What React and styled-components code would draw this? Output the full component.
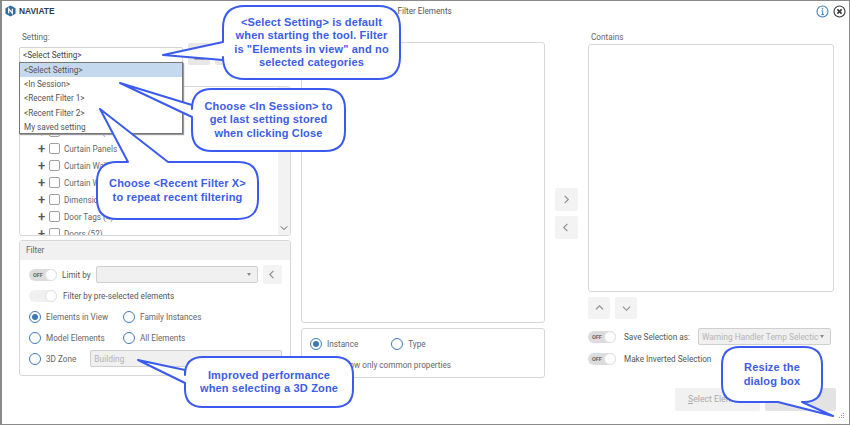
import React from 'react';
import styled, { createGlobalStyle } from 'styled-components';

const GlobalStyle = createGlobalStyle`
  html, body {
    margin: 0;
    padding: 0;
    background: #fff;
  }
`;

const Dialog = styled.div`
  position: relative;
  box-sizing: border-box;
  width: 850px;
  height: 425px;
  background: #fff;
  border: 1px solid #8a8a8a;
  border-left-width: 2px;
  overflow: hidden;
  font-family: Roboto, 'Open Sans', sans-serif;
  font-size: 8.2px;
  color: #555;
`;

const TitleBar = styled.div`
  position: relative;
  height: 20px;
  display: flex;
  align-items: center;
  padding: 0 3px;
`;

const Logo = styled.div`
  display: flex;
  align-items: center;
  gap: 3px;
  font-family: 'Liberation Sans', sans-serif;
  font-size: 8.4px;
  font-weight: 700;
  color: #2c3e50;
`;

const Title = styled.div`
  margin-left: 343px;
  color: #555;
`;

const TitleIcons = styled.div`
  margin-left: auto;
  display: flex;
  align-items: center;
  gap: 4px;
`;

const Body = styled.div`
  display: grid;
  grid-template-columns: 272px 244px 23px 246px;
  column-gap: 10px;
  padding: 0 0 0 17px;
`;

const LeftColumn = styled.div`
  position: relative;
  display: flex;
  flex-direction: column;
`;

const FieldLabel = styled.div`
  height: 21px;
  padding: 11px 0 0 3px;
  box-sizing: border-box;
  color: #666;
`;

const SettingRow = styled.div`
  display: flex;
  align-items: center;
  gap: 5px;
  height: 22px;
  margin-top: 1px;
`;

const Combo = styled.div`
  box-sizing: border-box;
  width: 164px;
  height: 16px;
  margin-top: 1px;
  padding-left: 3px;
  line-height: 14px;
  border: 1px solid #d4d4d4;
  border-radius: 2px;
  background: #fff;
  color: #444;
`;

const IconButton = styled.div`
  box-sizing: border-box;
  display: flex;
  align-items: center;
  justify-content: center;
  flex: none;
  width: ${(p) => p.$size || 22}px;
  height: ${(p) => p.$size || 22}px;
  border-radius: 2px;
  background: ${(p) => (p.$dark ? '#e7e7e7' : '#f3f3f3')};
  color: #8a8a8a;
`;

const Dropdown = styled.div`
  position: absolute;
  left: 0;
  top: 41px;
  box-sizing: border-box;
  width: 164px;
  height: 72px;
  background: #fff;
  border: 1px solid #777;
  box-shadow: 1px 1px 1px #999;
  z-index: 2;
`;

const DropdownItem = styled.div`
  height: 14.2px;
  line-height: 14px;
  padding-left: 4px;
  color: #555;
  background: ${(p) => (p.$selected ? '#c5d9ee' : 'transparent')};
`;

const TreeBox = styled.div`
  position: relative;
  box-sizing: border-box;
  height: 150px;
  margin-top: 21px;
  padding: 36px 0 0 17px;
  border: 1px solid #d8d8d8;
  border-radius: 3px;
  overflow: hidden;
`;

const TreeRow = styled.div`
  display: flex;
  align-items: center;
  height: 17px;
  gap: 3px;
  color: #666;
`;

const Plus = styled.span`
  width: 9px;
  font-size: 13px;
  font-weight: 500;
  line-height: 13px;
  color: #555;
  text-align: center;
`;

const Check = styled.span`
  box-sizing: border-box;
  width: 11px;
  height: 11px;
  margin-right: 1px;
  border: 1px solid #a0a0a0;
  border-radius: 2px;
`;

const ScrollTrack = styled.div`
  position: absolute;
  right: 0;
  top: 0;
  bottom: 0;
  width: 12px;
  background: #f2f2f2;
  display: flex;
  align-items: flex-end;
  justify-content: center;
  padding-bottom: 3px;
  box-sizing: border-box;
`;

const Panel = styled.div`
  box-sizing: border-box;
  border: 1px solid #d8d8d8;
  border-radius: 3px;
  background: #fff;
`;

const FilterPanel = styled(Panel)`
  height: 136px;
  margin-top: 4px;
`;

const PanelHeader = styled.div`
  height: 19px;
  line-height: 19px;
  padding-left: 6px;
  background: #f1f1f1;
  color: #666;
`;

const FilterBody = styled.div`
  display: flex;
  flex-direction: column;
  padding: 4px 8px 0 9px;
`;

const Row = styled.div`
  display: flex;
  align-items: center;
  height: ${(p) => p.$h || 21}px;
  gap: ${(p) => p.$gap || 6}px;
  white-space: nowrap;
`;

const ToggleTrack = styled.div`
  position: relative;
  box-sizing: border-box;
  flex: none;
  width: 28px;
  height: 12px;
  border-radius: 6px;
  background: ${(p) => (p.$faded ? '#f0f0f0' : '#dcdcdc')};
  font-size: 5.5px;
  font-weight: 700;
  line-height: 12px;
  padding-left: 4px;
  color: #666;
`;

const ToggleKnob = styled.div`
  position: absolute;
  right: 0;
  top: 0;
  box-sizing: border-box;
  width: 12px;
  height: 12px;
  border-radius: 50%;
  background: #fff;
  border: 1px solid #e2e2e2;
`;

const SelectBox = styled.div`
  box-sizing: border-box;
  display: flex;
  align-items: center;
  justify-content: space-between;
  flex: ${(p) => (p.$fill ? 1 : 'none')};
  width: ${(p) => (p.$w ? `${p.$w}px` : 'auto')};
  height: 17px;
  padding: 0 6px 0 3px;
  background: #f0f0f0;
  border: 1px solid #cfcfcf;
  border-radius: 2px;
  color: #b4b4b4;
  font-size: 8.4px;
  white-space: nowrap;
  overflow: hidden;
`;

const Caret = styled.span`
  flex: none;
  width: 0;
  height: 0;
  border-left: 2px solid transparent;
  border-right: 2px solid transparent;
  border-top: 3px solid #888;
`;

const RadioGrid = styled.div`
  display: grid;
  grid-template-columns: 94px 1fr;
`;

const RadioLabel = styled.label`
  display: flex;
  align-items: center;
  gap: 5px;
  height: 21px;
  color: #666;
`;

const RadioDot = styled.span`
  box-sizing: border-box;
  display: flex;
  align-items: center;
  justify-content: center;
  flex: none;
  width: 12px;
  height: 12px;
  border-radius: 50%;
  border: 1.5px solid #3f79b5;
  &::after {
    content: '';
    display: ${(p) => (p.$on ? 'block' : 'none')};
    width: 6px;
    height: 6px;
    border-radius: 50%;
    background: #3f79b5;
  }
`;

const MiddleColumn = styled.div`
  display: flex;
  flex-direction: column;
  padding-top: 21px;
`;

const ListPanel = styled(Panel)`
  height: ${(p) => p.$h}px;
  margin-top: ${(p) => p.$mt || 0}px;
`;

const InstancePanel = styled(Panel)`
  height: 50px;
  margin-top: 5px;
  padding: 4px 8px 0;
`;

const TypeRow = styled.div`
  display: flex;
  gap: 33px;
`;

const CommonRow = styled(Row)`
  margin-top: 0;
  color: #666;
`;

const ArrowColumn = styled.div`
  display: flex;
  flex-direction: column;
  gap: 5px;
  padding-top: 167px;
`;

const RightColumn = styled.div`
  display: flex;
  flex-direction: column;
`;

const MoveRow = styled.div`
  display: flex;
  gap: 5px;
  margin-top: 5px;
`;

const OptionRows = styled.div`
  display: flex;
  flex-direction: column;
  margin-top: 6px;
`;

const Footer = styled.div`
  display: flex;
  justify-content: flex-end;
  gap: 5px;
  margin: 18px -2px 0 0;
`;

const FooterButton = styled.div`
  box-sizing: border-box;
  width: ${(p) => p.$w}px;
  height: 23px;
  line-height: 23px;
  padding-left: 13px;
  border-radius: 2px;
  background: ${(p) => (p.$dark ? '#e3e3e3' : '#f1f1f1')};
  color: #aaa;
  font-size: 8.7px;
  white-space: nowrap;
`;

const Mnemonic = styled.span`
  text-decoration: underline;
`;

const Grip = styled.svg`
  position: absolute;
  right: 4px;
  bottom: 4px;
`;

const Callout = styled.div`
  position: absolute;
  left: ${(p) => p.$left}px;
  top: ${(p) => p.$top}px;
  width: ${(p) => p.$width}px;
  height: ${(p) => p.$height}px;
  z-index: 3;
  display: flex;
  align-items: center;
  justify-content: center;
  text-align: center;
  font-family: 'Liberation Sans', Arial, sans-serif;
  font-size: 11px;
  font-weight: 700;
  line-height: 13.5px;
  letter-spacing: 0.15px;
  color: #3c5de6;
  white-space: pre-line;
`;

const CalloutText = styled.span`
  position: relative;
`;

const TailShape = styled.svg`
  position: absolute;
  left: 0;
  top: 0;
  overflow: visible;
`;

// bubble outline, drawn relative to the page so tail tips can reach targets
const Bubble = ({ x, y, w, h, r, tip, a, b, side, children }) => {
  const x2 = x + w;
  const y2 = y + h;
  let d;
  if (side === 'left') {
    d = `M${x + r} ${y}H${x2 - r}Q${x2} ${y} ${x2} ${y + r}V${y2 - r}Q${x2} ${y2} ${x2 - r} ${y2}H${x + r}Q${x} ${y2} ${x} ${y2 - r}V${b}L${tip[0]} ${tip[1]}L${x} ${a}V${y + r}Q${x} ${y} ${x + r} ${y}Z`;
  } else if (side === 'top') {
    d = `M${x + r} ${y}H${a}L${tip[0]} ${tip[1]}L${b} ${y}H${x2 - r}Q${x2} ${y} ${x2} ${y + r}V${y2 - r}Q${x2} ${y2} ${x2 - r} ${y2}H${x + r}Q${x} ${y2} ${x} ${y2 - r}V${y + r}Q${x} ${y} ${x + r} ${y}Z`;
  } else {
    d = `M${x + r} ${y}H${x2 - r}Q${x2} ${y} ${x2} ${y + r}V${y2 - r}Q${x2} ${y2} ${x2 - r} ${y2}H${b}L${tip[0]} ${tip[1]}L${a} ${y2}H${x + r}Q${x} ${y2} ${x} ${y2 - r}V${y + r}Q${x} ${y} ${x + r} ${y}Z`;
  }
  return (
    <Callout $left={x} $top={y} $width={w} $height={h}>
      <TailShape width={w} height={h} viewBox={`${x} ${y} ${w} ${h}`}>
        <path d={d} fill="#fff" stroke="#3b5bee" strokeWidth="2" strokeLinejoin="round" />
      </TailShape>
      <CalloutText>{children}</CalloutText>
    </Callout>
  );
};

const Chevron = ({ dir, size = 9, color = '#8a8a8a' }) => {
  const paths = {
    left: 'M6 1L2 5L6 9',
    right: 'M3 1L7 5L3 9',
    up: 'M1 6L5 2L9 6',
    down: 'M1 3L5 7L9 3'
  };
  return (
    <svg width={size} height={size} viewBox="0 0 10 10" fill="none">
      <path d={paths[dir]} stroke={color} strokeWidth="1.2" />
    </svg>
  );
};

const Toggle = ({ faded }) => (
  <ToggleTrack $faded={faded}>
    {faded ? '' : 'OFF'}
    <ToggleKnob />
  </ToggleTrack>
);

const Radio = ({ on, children }) => (
  <RadioLabel>
    <RadioDot $on={on} />
    {children}
  </RadioLabel>
);

const treeItems = [
  'Casework (14)',
  'Curtain Panels',
  'Curtain Wall Grids',
  'Curtain Wall Mullions',
  'Dimensions (3)',
  'Door Tags (4)',
  'Doors (52)'
];

export default function App() {
  return (
    <>
      <GlobalStyle />
      <Dialog>
        <TitleBar>
          <Logo>
            <svg width="11" height="12" viewBox="0 0 12 13">
              <path d="M6 0.5L11.5 3.5V9.5L6 12.5L0.5 9.5V3.5Z" fill="#2f6f9f" />
              <path d="M4 9V4L8 9V4" fill="none" stroke="#fff" strokeWidth="1.3" />
            </svg>
            NAVIATE
          </Logo>
          <Title>Filter Elements</Title>
          <TitleIcons>
            <svg width="13" height="13" viewBox="0 0 13 13" fill="none">
              <circle cx="6.5" cy="6.5" r="5.5" stroke="#3f7fc0" strokeWidth="1.1" />
              <path d="M5.5 5.8H6.7V9.6M5.3 9.6H8" stroke="#3f7fc0" strokeWidth="1" />
              <circle cx="6.5" cy="3.8" r="0.8" fill="#3f7fc0" />
            </svg>
            <svg width="13" height="13" viewBox="0 0 13 13" fill="none">
              <circle cx="6.5" cy="6.5" r="5.5" stroke="#333" strokeWidth="1.1" />
              <path d="M4.4 4.4L8.6 8.6M8.6 4.4L4.4 8.6" stroke="#333" strokeWidth="1.5" />
            </svg>
          </TitleIcons>
        </TitleBar>

        <Body>
          <LeftColumn>
            <FieldLabel>Setting:</FieldLabel>
            <SettingRow>
              <Combo>&lt;Select Setting&gt;</Combo>
              <IconButton $size={22} $dark>
                <svg width="11" height="11" viewBox="0 0 11 11">
                  <path d="M0.5 0.5H10.5V10.5H0.5Z" fill="#666" />
                  <path d="M2 2H9V4.5H2Z" fill="#e7e7e7" />
                </svg>
              </IconButton>
              <IconButton $size={22} $dark />
            </SettingRow>
            <Dropdown>
              <DropdownItem $selected>&lt;Select Setting&gt;</DropdownItem>
              <DropdownItem>&lt;In Session&gt;</DropdownItem>
              <DropdownItem>&lt;Recent Filter 1&gt;</DropdownItem>
              <DropdownItem>&lt;Recent Filter 2&gt;</DropdownItem>
              <DropdownItem>My saved setting</DropdownItem>
            </Dropdown>
            <TreeBox>
              {treeItems.map((item) => (
                <TreeRow key={item}>
                  <Plus>+</Plus>
                  <Check />
                  {item}
                </TreeRow>
              ))}
              <ScrollTrack>
                <Chevron dir="down" size={8} color="#555" />
              </ScrollTrack>
            </TreeBox>
            <FilterPanel>
              <PanelHeader>Filter</PanelHeader>
              <FilterBody>
                <Row $gap={5}>
                  <Toggle />
                  Limit by
                  <SelectBox $fill>
                    <span />
                    <Caret />
                  </SelectBox>
                  <IconButton $size={19}>
                    <Chevron dir="left" />
                  </IconButton>
                </Row>
                <Row>
                  <Toggle faded />
                  Filter by pre-selected elements
                </Row>
                <RadioGrid>
                  <Radio on>Elements in View</Radio>
                  <Radio>Family Instances</Radio>
                  <Radio>Model Elements</Radio>
                  <Radio>All Elements</Radio>
                </RadioGrid>
                <Row $gap={14}>
                  <Radio>3D Zone</Radio>
                  <SelectBox $fill>Building</SelectBox>
                </Row>
              </FilterBody>
            </FilterPanel>
          </LeftColumn>

          <MiddleColumn>
            <ListPanel $h={281} />
            <InstancePanel>
              <TypeRow>
                <Radio on>Instance</Radio>
                <Radio>Type</Radio>
              </TypeRow>
              <CommonRow $gap={2}>
                <Toggle />
                Show only common properties
              </CommonRow>
            </InstancePanel>
          </MiddleColumn>

          <ArrowColumn>
            <IconButton $size={23}>
              <Chevron dir="right" />
            </IconButton>
            <IconButton $size={23}>
              <Chevron dir="left" />
            </IconButton>
          </ArrowColumn>

          <RightColumn>
            <FieldLabel>Contains</FieldLabel>
            <ListPanel $h={248} $mt={2} />
            <MoveRow>
              <IconButton $size={22}>
                <Chevron dir="up" />
              </IconButton>
              <IconButton $size={22}>
                <Chevron dir="down" />
              </IconButton>
            </MoveRow>
            <OptionRows>
              <Row $h={23} $gap={8}>
                <Toggle />
                Save Selection as:
                <SelectBox $w={133}>
                  Warning Handler Temp Selectic
                  <Caret />
                </SelectBox>
              </Row>
              <Row $h={22} $gap={8}>
                <Toggle />
                Make Inverted Selection
              </Row>
            </OptionRows>
            <Footer>
              <FooterButton $w={85}>
                <Mnemonic>S</Mnemonic>elect Elements
              </FooterButton>
              <FooterButton $w={71} $dark />
            </Footer>
          </RightColumn>
        </Body>

        <Grip width="8" height="8" viewBox="0 0 8 8">
          <path d="M6 1h1v1H6zM4 3h1v1H4zM6 3h1v1H6zM2 5h1v1H2zM4 5h1v1H4zM6 5h1v1H6z" fill="#999" />
        </Grip>

        <Bubble x={221} y={5} w={177} h={73} r={22} side="left" tip={[161, 54]} a={41} b={59}>
          {'<Select Setting> is default\nwhen starting the tool. Filter\nis "Elements in view" and no\nselected categories'}
        </Bubble>
        <Bubble x={190} y={88} w={153} h={62} r={20} side="left" tip={[118, 82]} a={104} b={116}>
          {'Choose <In Session> to\nget last setting stored\nwhen clicking Close'}
        </Bubble>
        <Bubble x={95} y={161} w={161} h={57} r={20} side="top" tip={[98, 108]} a={126} b={166}>
          {'Choose <Recent Filter X>\nto repeat recent filtering'}
        </Bubble>
        <Bubble x={183} y={356} w={168} h={50} r={18} side="left" tip={[136, 359]} a={369} b={382}>
          {'Improved performance\nwhen selecting a 3D Zone'}
        </Bubble>
        <Bubble x={720} y={346} w={100} h={55} r={18} side="bottom" tip={[831, 415]} a={776} b={800}>
          {'Resize the\ndialog box'}
        </Bubble>
      </Dialog>
    </>
  );
}
